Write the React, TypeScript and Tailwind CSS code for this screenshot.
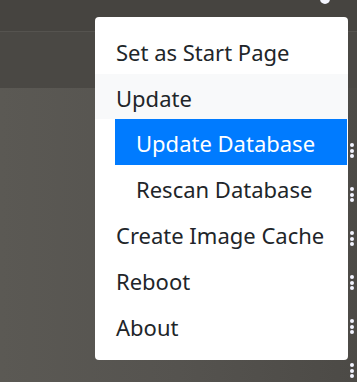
import React from "react";

function Kebab() {
  return (
    <div className="flex flex-col items-center gap-[1.5px]">
      <div className="w-[4px] h-[4px] rounded-full bg-[#f2f4ff]" />
      <div className="w-[4px] h-[4px] rounded-full bg-[#f2f4ff]" />
      <div className="w-[4px] h-[4px] rounded-full bg-[#f2f4ff]" />
    </div>
  );
}

export default function App() {
  const font = { fontFamily: '"Noto Sans", "Open Sans", sans-serif' };
  return (
    <div className="relative w-[357px] h-[382px] overflow-hidden bg-[#4a4844]" style={font}>
      {/* background bands */}
      <div className="flex flex-col h-full">
        <div className="h-[31px] bg-[#464440]" />
        <div className="h-[1px] bg-[#55534f]" />
        <div className="h-[56px] bg-[#4a4844]" />
        <div className="flex-1 bg-gradient-to-r from-[#5b5954] via-[#55534f] to-[#4c4a46]" />
      </div>

      {/* top gear fragment */}
      <div className="absolute left-[320px] top-[-6px] w-[10px] h-[10px] rounded-full bg-[#f4f6ff]" />

      {/* kebab column */}
      <div className="absolute left-[350px] top-[143px] flex flex-col gap-[29px]">
        <Kebab />
        <Kebab />
        <Kebab />
        <Kebab />
        <Kebab />
        <Kebab />
      </div>

      {/* chevron */}
      <div className="absolute left-[101px] top-[270px] text-[14px] text-[#ebe8ff]">›</div>

      {/* dropdown menu */}
      <div className="absolute left-[95px] top-[17px] w-[253px] h-[343px] rounded-[4px] bg-white py-[11px] text-[#212529] text-[22px] leading-[49px]">
        <div className="px-[21px] h-[46px]">Set as Start Page</div>
        <div className="px-[21px] h-[45px] bg-[#f8f9fa]">Update</div>
        <div className="ml-[20px] mr-[1px] pl-[21px] h-[46px] bg-[#007bff] text-white">Update Database</div>
        <div className="ml-[20px] pl-[21px] h-[46px]">Rescan Database</div>
        <div className="px-[21px] h-[46px]">Create Image Cache</div>
        <div className="px-[21px] h-[46px]">Reboot</div>
        <div className="px-[21px] h-[46px]">About</div>
      </div>
    </div>
  );
}
